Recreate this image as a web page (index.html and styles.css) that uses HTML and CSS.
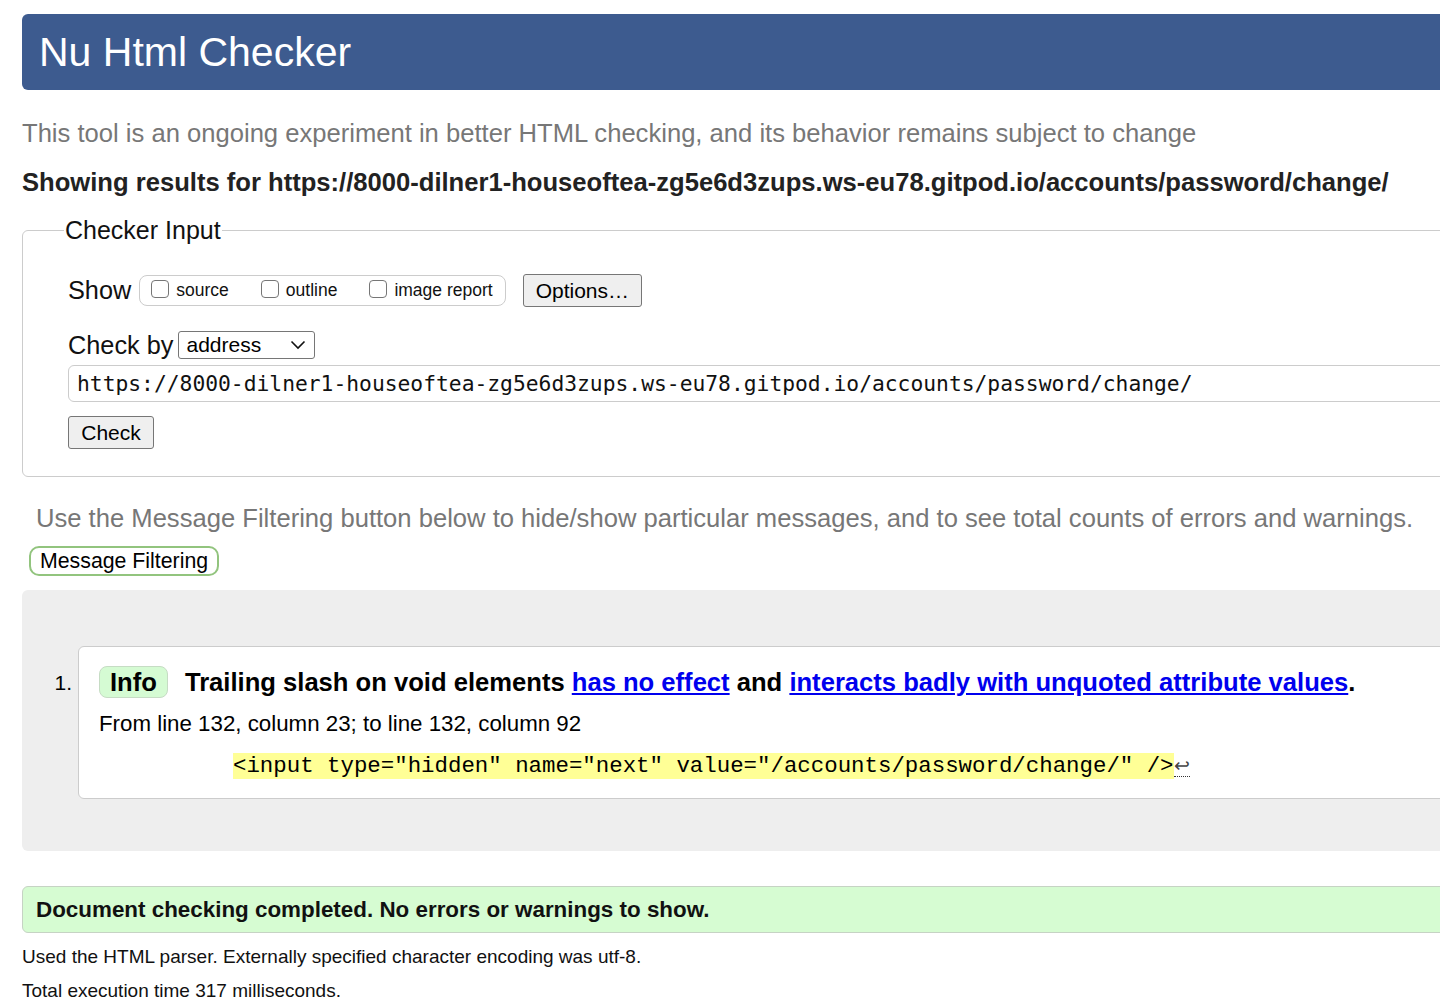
FILE: index.html
```html
<!DOCTYPE html>
<html lang="en">
<head>
<meta charset="utf-8">
<title>Showing results for https://8000-dilner1-houseoftea-zg5e6d3zups.ws-eu78.gitpod.io/accounts/password/change/ - Nu Html Checker</title>
<link rel="stylesheet" href="styles.css">
</head>
<body>
<div class="page">
  <h1 class="title">Nu Html Checker</h1>
  <p class="lead">This tool is an ongoing experiment in better HTML checking, and its behavior remains subject to change</p>
  <p class="results-for">Showing results for https://8000-dilner1-houseoftea-zg5e6d3zups.ws-eu78.gitpod.io/accounts/password/change/</p>

  <fieldset class="checker">
    <legend class="checker-legend">Checker Input</legend>
    <div class="row show-row">
      <span class="lbl">Show</span>
      <div class="opts">
        <label class="opt"><span class="box"></span>source</label>
        <label class="opt"><span class="box"></span>outline</label>
        <label class="opt"><span class="box"></span>image report</label>
      </div>
      <button class="btn options-btn" type="button">Options…</button>
    </div>
    <div class="row by-row">
      <span class="lbl">Check by</span>
      <div class="select">
        <span>address</span>
        <svg class="chev" width="16" height="10" viewBox="0 0 16 10"><polyline points="1.5,1.5 8,8 14.5,1.5" fill="none" stroke="#111" stroke-width="1.6"/></svg>
      </div>
    </div>
    <div class="url">https://8000-dilner1-houseoftea-zg5e6d3zups.ws-eu78.gitpod.io/accounts/password/change/</div>
    <button class="btn check-btn" type="button">Check</button>
  </fieldset>

  <p class="hint">Use the Message Filtering button below to hide/show particular messages, and to see total counts of errors and warnings.</p>
  <button class="filter" type="button">Message Filtering</button>

  <div class="results">
    <ol class="msgs">
      <li class="msg">
        <span class="num">1.</span>
        <div class="card">
          <p class="msg-head"><span class="badge">Info</span>Trailing slash on void elements <a href="#">has no effect</a> and <a href="#">interacts badly with unquoted attribute values</a>.</p>
          <p class="loc">From line 132, column 23; to line 132, column 92</p>
          <p class="extract"><code class="hl">&lt;input type="hidden" name="next" value="/accounts/password/change/" /&gt;</code><span class="lf">↩</span></p>
        </div>
      </li>
    </ol>
  </div>

  <p class="success">Document checking completed. No errors or warnings to show.</p>
  <p class="meta first">Used the HTML parser. Externally specified character encoding was utf-8.</p>
  <p class="meta">Total execution time 317 milliseconds.</p>
</div>
</body>
</html>
```

FILE: styles.css
```css
html {
  overflow: hidden;
}
body {
  margin: 0;
  padding: 14px 0 0 22px;
  font-family: "Liberation Sans", Arial, Helvetica, sans-serif;
  color: #000;
  background: #fff;
}
.page {
  width: 1500px;
}
p {
  margin: 0;
}
.title {
  margin: 0;
  height: 76px;
  line-height: 76px;
  padding-left: 17px;
  background: #3d5b8f;
  color: #fff;
  font-size: 41px;
  font-weight: normal;
  border-radius: 6px;
}
.lead {
  margin-top: 29px;
  font-size: 25.6px;
  line-height: 28px;
  color: #777;
}
.results-for {
  margin-top: 21px;
  font-size: 25.6px;
  line-height: 28px;
  font-weight: bold;
  color: #222;
}
.checker {
  margin: 20px 0 0 0;
  padding: 0 0 27px 45px;
  border: 1px solid #ccc;
  border-radius: 6px;
  min-width: 0;
}
.checker-legend {
  font-size: 25px;
  line-height: 28px;
  padding: 0 1px;
  margin-left: -4px;
  color: #111;
}
.row {
  display: flex;
  align-items: center;
}
.lbl {
  font-size: 25.3px;
  color: #111;
}
.show-row {
  margin-top: 30px;
  height: 33px;
}
.opts {
  display: flex;
  align-items: center;
  height: 29px;
  margin-left: 8px;
  padding: 0 12px 0 11px;
  border: 1px solid #ccc;
  border-radius: 8px;
  gap: 32px;
}
.opt {
  display: flex;
  align-items: center;
  font-size: 17.5px;
  color: #111;
}
.box {
  display: inline-block;
  width: 16px;
  height: 16px;
  border: 1px solid #767676;
  border-radius: 4px;
  margin-right: 7px;
  margin-top: -4px;
  background: #fff;
}
.btn {
  font-family: "Liberation Sans", Arial, sans-serif;
  font-size: 21px;
  color: #000;
  background: #efefef;
  border: 1px solid #767676;
  border-radius: 3px;
  height: 33px;
  padding: 0 12px;
}
.options-btn {
  margin-left: 17px;
  width: 119px;
}
.by-row {
  margin-top: 24px;
  height: 28px;
}
.select {
  display: flex;
  align-items: center;
  justify-content: space-between;
  margin-left: 5px;
  width: 120px;
  height: 26px;
  padding: 0 8px 0 7px;
  box-sizing: content-box;
  border: 1px solid #767676;
  border-radius: 3px;
  font-size: 21px;
  color: #000;
}
.url {
  margin-top: 6px;
  height: 35px;
  line-height: 35px;
  padding-left: 8px;
  border: 1px solid #ccc;
  border-radius: 6px;
  font-family: "DejaVu Sans Mono", monospace;
  font-size: 21.3px;
  color: #111;
  white-space: nowrap;
}
.check-btn {
  display: block;
  margin-top: 14px;
  width: 86px;
}
.hint {
  margin-top: 27px;
  padding-left: 14px;
  font-size: 25.6px;
  line-height: 28px;
  color: #777;
}
.filter {
  display: block;
  margin: 14px 0 0 7px;
  height: 30px;
  padding: 0 9px;
  background: #fff;
  border: 2px solid #92c47e;
  border-radius: 10px;
  font-family: "Liberation Sans", Arial, sans-serif;
  font-size: 21.3px;
  color: #000;
}
.results {
  margin-top: 14px;
  background: #eee;
  border-radius: 6px;
  padding: 56px 0 52px 0;
}
.msgs {
  list-style: none;
  margin: 0;
  padding: 0;
}
.msg {
  display: flex;
  align-items: flex-start;
}
.num {
  width: 56px;
  box-sizing: border-box;
  padding: 25px 6px 0 0;
  text-align: right;
  font-size: 21px;
  line-height: 24px;
}
.card {
  flex: 1;
  background: #fff;
  border: 1px solid #ccc;
  border-radius: 6px;
  padding: 19px 0 18px 20px;
}
.msg-head {
  font-size: 25.6px;
  line-height: 32px;
  font-weight: bold;
  white-space: nowrap;
}
.badge {
  display: inline-block;
  line-height: 30px;
  padding: 0 10px;
  margin-right: 17px;
  background: #d5fbd3;
  border: 1px solid #c6dcc4;
  border-radius: 8px;
}
.msg-head a {
  color: #0000ee;
  text-decoration: underline;
}
.loc {
  margin-top: 12px;
  font-size: 22.3px;
  line-height: 28px;
}
.extract {
  margin-top: 15px;
  margin-left: 134px;
  line-height: 26px;
  white-space: nowrap;
}
.hl {
  font-family: "Liberation Mono", "Courier New", monospace;
  font-size: 22.4px;
  background: #ffff96;
}
.lf {
  font-size: 19px;
  color: #444;
  border-bottom: 1px dotted #333;
}
.success {
  margin-top: 35px;
  height: 45px;
  line-height: 45px;
  padding-left: 13px;
  background: #d6fcd2;
  border: 1px solid #c6d3c4;
  border-radius: 6px;
  font-size: 22.4px;
  font-weight: bold;
  color: #111;
}
.meta {
  font-size: 19px;
  line-height: 22px;
  margin-top: 12px;
  color: #111;
}
.meta.first {
  margin-top: 13px;
}
```
